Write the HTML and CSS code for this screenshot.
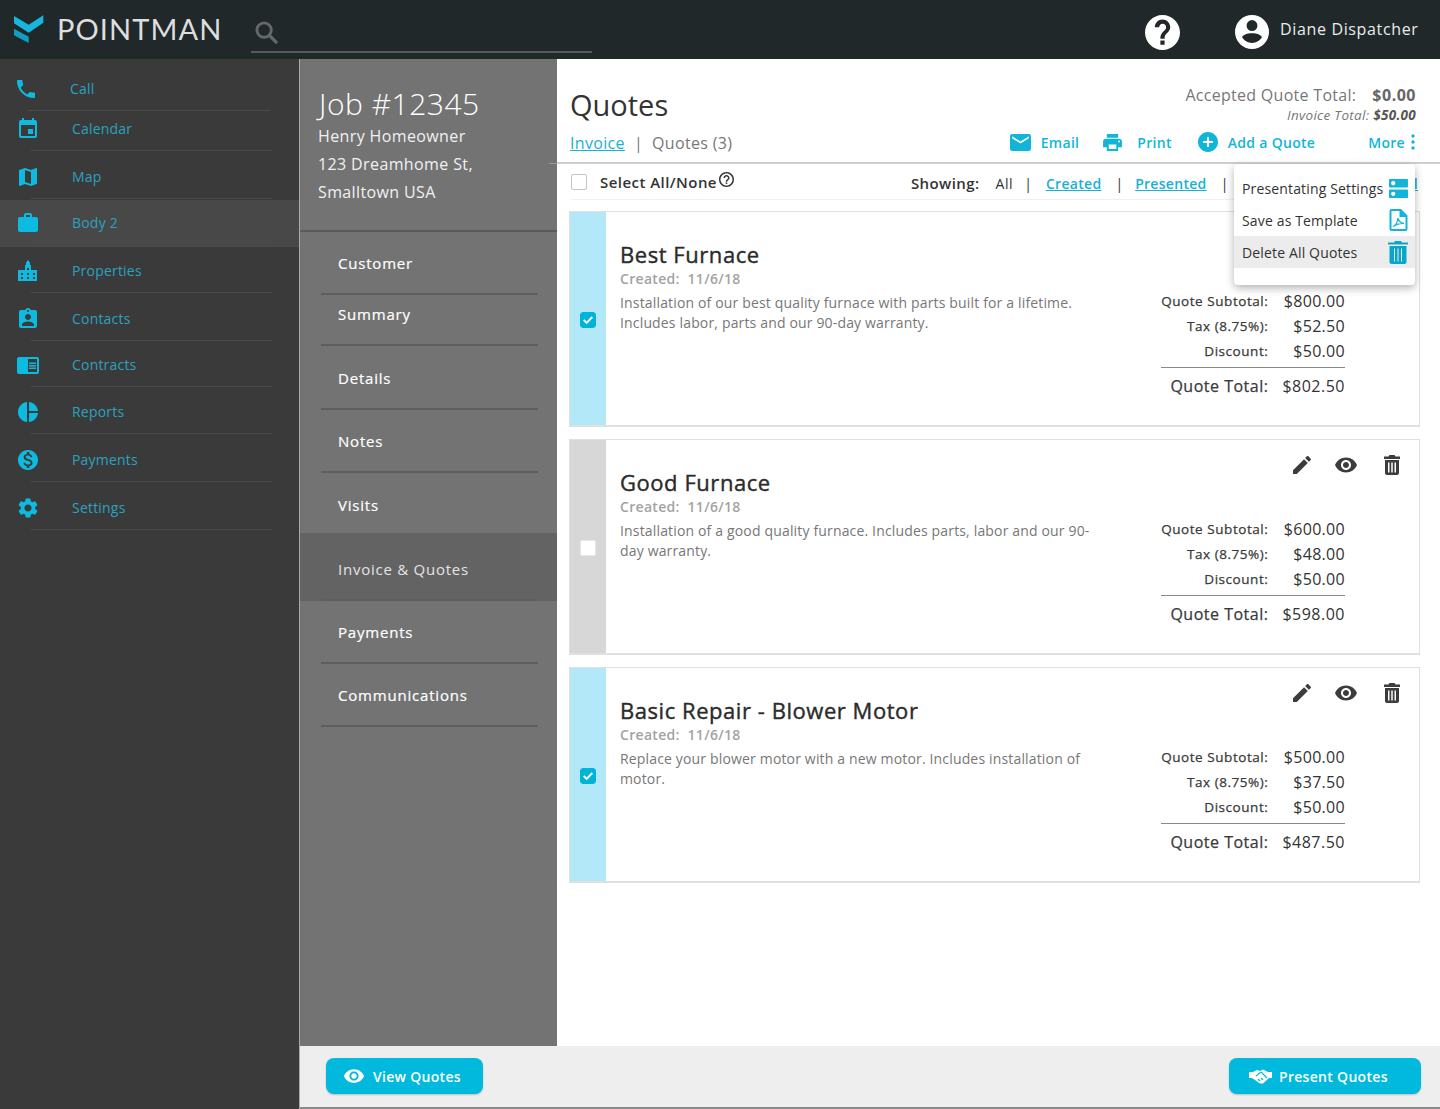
FILE: index.html
```html
<!DOCTYPE html>
<html lang="en">
<head>
<meta charset="utf-8">
<title>Pointman - Quotes</title>
<link rel="stylesheet" href="styles.css">
</head>
<body>
<svg class="sprite" aria-hidden="true">
  <defs>
    <symbol id="i-edit" viewBox="0 0 24 24"><path d="M3 17.25V21h3.75L17.81 9.94l-3.75-3.75L3 17.25zM20.71 7.04c.39-.39.39-1.02 0-1.41l-2.34-2.34c-.39-.39-1.02-.39-1.41 0l-1.83 1.83 3.75 3.75 1.83-1.83z"/></symbol>
    <symbol id="i-eye" viewBox="0 0 24 24"><path d="M12 4.5C7 4.5 2.73 7.61 1 12c1.73 4.39 6 7.5 11 7.5s9.27-3.11 11-7.5c-1.73-4.39-6-7.5-11-7.5zM12 17c-2.76 0-5-2.24-5-5s2.24-5 5-5 5 2.24 5 5-2.24 5-5 5zm0-8c-1.66 0-3 1.34-3 3s1.34 3 3 3 3-1.34 3-3-1.34-3-3-3z"/></symbol>
    <symbol id="i-trash" viewBox="0 0 24 24"><path fill-rule="evenodd" d="M9.5 2h5l1 1.5H20V6H4V3.5h4.500zM5 7h14v13c0 1.100-.9 2-2 2H7c-1.100 0-2-.9-2-2zm3 2.500V19.500h1.500V9.500zm3.250 0V19.500h1.500V9.500zm3.250 0V19.500H16V9.500z"/></symbol>
    <symbol id="i-check" viewBox="0 0 16 16"><path d="M2 0h12a2 2 0 0 1 2 2v12a2 2 0 0 1-2 2H2a2 2 0 0 1-2-2V2a2 2 0 0 1 2-2zm4.600 12.200 6.400-6.500-1.400-1.400-5 5.100-2.200-2.200L3 8.600z" fill-rule="evenodd"/></symbol>
  </defs>
</svg>
<div class="app">
  <header class="topbar">
    <div class="brand">
      <svg class="logo" viewBox="0 0 30 28" aria-hidden="true">
        <polygon points="0,1 14.700,9.700 29.300,0.300 29.300,7.700 14.700,17.700 0,8.300" fill="#17b6dc"/>
        <polygon points="0,13.700 14.700,21.700 14.700,28 0,20.300" fill="#0f9ec2"/>
      </svg>
      <span class="brand-name">POINTMAN</span>
    </div>
    <div class="search">
      <svg class="search-icon" viewBox="0 0 26 26" aria-hidden="true"><circle cx="10.500" cy="10.500" r="7.500" fill="none" stroke="currentColor" stroke-width="3"/><path d="M16 16l8 8" stroke="currentColor" stroke-width="3.500"/></svg>
    </div>
    <svg class="help-icon" viewBox="2 2 20 20" aria-hidden="true"><path d="M12 2C6.480 2 2 6.480 2 12s4.480 10 10 10 10-4.480 10-10S17.520 2 12 2zm1.200 17h-2.400v-2.400h2.400V19zm2.200-7.500l-.9.900c-.9.800-1.300 1.500-1.300 3.100h-2.400v-.6c0-1.200.5-2.300 1.300-3.100l1.400-1.400c.4-.4.600-.9.600-1.400 0-1.100-.9-2-2-2s-2 .9-2 2H7.600c0-2.400 2-4.400 4.400-4.400s4.400 2 4.400 4.400c0 1-.4 1.800-1 2.400z"/></svg>
    <div class="user">
      <svg class="user-icon" viewBox="2 2 20 20" aria-hidden="true"><path fill-rule="evenodd" d="M12 2a10 10 0 1 0 0 20 10 10 0 0 0 0-20zm0 3a3.200 3.200 0 1 1 0 6.400A3.200 3.200 0 0 1 12 5zm0 7.800c2.800 0 5.300.9 5.800 2.300-1.100 2-3.300 3.300-5.800 3.300s-4.700-1.300-5.800-3.300c.5-1.400 3-2.300 5.800-2.300z"/></svg>
      <span>Diane Dispatcher</span>
    </div>
  </header>

  <nav class="rail">
    <a class="rail-item rail-first"><svg class="rail-icon" viewBox="0 0 24 24"><path d="M6.620 10.790c1.440 2.830 3.760 5.140 6.590 6.590l2.200-2.200c.27-.27.67-.36 1.020-.24 1.120.37 2.330.57 3.570.57.55 0 1 .45 1 1V20c0 .55-.45 1-1 1-9.390 0-17-7.610-17-17 0-.55.45-1 1-1h3.500c.55 0 1 .45 1 1 0 1.250.2 2.450.57 3.570.11.35.03.74-.25 1.020l-2.200 2.200z"/></svg><span>Call</span></a>
    <a class="rail-item"><svg class="rail-icon" viewBox="0 0 24 24"><path d="M17 12h-5v5h5v-5zM16 1v2H8V1H6v2H5c-1.110 0-2 .9-2 2v14c0 1.100.89 2 2 2h14c1.100 0 2-.9 2-2V5c0-1.100-.9-2-2-2h-1V1h-2zm3 18H5V8h14v11z"/></svg><span>Calendar</span></a>
    <a class="rail-item"><svg class="rail-icon" viewBox="0 0 24 24"><path d="M20.500 3l-.16.03L15 5.100 9 3 3.360 4.900c-.21.07-.36.25-.36.48V20.500c0 .28.22.5.5.5l.16-.03L9 18.900l6 2.100 5.640-1.900c.21-.07.36-.25.36-.48V3.500c0-.28-.22-.5-.5-.5zM15 19l-6-2.110V5l6 2.110V19z"/></svg><span>Map</span></a>
    <a class="rail-item is-active"><svg class="rail-icon" viewBox="0 0 24 24"><path d="M20 6h-4V4c0-1.110-.89-2-2-2h-4c-1.110 0-2 .89-2 2v2H4c-1.110 0-2 .89-2 2v11c0 1.110.89 2 2 2h16c1.110 0 2-.89 2-2V8c0-1.110-.89-2-2-2zm-6 0h-4V4h4v2z"/></svg><span>Body 2</span></a>
    <a class="rail-item"><svg class="rail-icon" viewBox="0 0 24 24"><path fill-rule="evenodd" d="M9 6h1V3h1V1.500h2V3h1v3h1v5h6v11H2V11h7V6zM5 14v2h2v-2zm0 4v2h2v-2zm6-9v2h2V9zm0 5v2h2v-2zm0 4v2h2v-2zm6-4v2h2v-2zm0 4v2h2v-2z"/></svg><span>Properties</span></a>
    <a class="rail-item"><svg class="rail-icon" viewBox="0 0 24 24"><path d="M19 3h-4.180C14.400 1.840 13.300 1 12 1c-1.300 0-2.400.84-2.820 2H5c-1.100 0-2 .9-2 2v14c0 1.100.9 2 2 2h14c1.100 0 2-.9 2-2V5c0-1.100-.9-2-2-2zm-7 0c.55 0 1 .45 1 1s-.45 1-1 1-1-.45-1-1 .45-1 1-1zm0 4c1.660 0 3 1.340 3 3s-1.340 3-3 3-3-1.340-3-3 1.340-3 3-3zm6 12H6v-1.400c0-2 4-3.100 6-3.100s6 1.100 6 3.100V19z"/></svg><span>Contacts</span></a>
    <a class="rail-item"><svg class="rail-icon" viewBox="0 0 24 24"><path d="M13 12h7v1.500h-7zm0-2.500h7V11h-7zm0 5h7V16h-7zM21 4H3c-1.100 0-2 .9-2 2v13c0 1.100.9 2 2 2h18c1.100 0 2-.9 2-2V6c0-1.100-.9-2-2-2zm0 15h-9V6h9v13z"/></svg><span>Contracts</span></a>
    <a class="rail-item"><svg class="rail-icon" viewBox="0 0 24 24"><path d="M11 2v20c-5.070-.5-9-4.790-9-10s3.930-9.500 9-10zm2.030 0v8.990H22c-.47-4.740-4.240-8.520-8.970-8.990zm0 11.010V22c4.740-.47 8.500-4.250 8.970-8.990h-8.970z"/></svg><span>Reports</span></a>
    <a class="rail-item"><svg class="rail-icon" viewBox="0 0 24 24"><path d="M12 2C6.480 2 2 6.480 2 12s4.480 10 10 10 10-4.480 10-10S17.520 2 12 2zm1.410 16.090V20h-2.670v-1.930c-1.710-.36-3.160-1.460-3.270-3.400h1.960c.1 1.050.82 1.870 2.650 1.870 1.960 0 2.400-.98 2.400-1.590 0-.83-.44-1.610-2.670-2.140-2.480-.6-4.180-1.620-4.180-3.670 0-1.720 1.390-2.840 3.110-3.210V4h2.670v1.950c1.860.45 2.790 1.860 2.850 3.390H14.300c-.05-1.110-.64-1.870-2.220-1.870-1.500 0-2.400.68-2.400 1.640 0 .84.65 1.390 2.670 1.910s4.180 1.390 4.180 3.910c-.01 1.830-1.380 2.830-3.120 3.160z"/></svg><span>Payments</span></a>
    <a class="rail-item"><svg class="rail-icon" viewBox="0 0 24 24"><path d="M19.140 12.940c.04-.3.06-.61.06-.94 0-.32-.02-.64-.07-.94l2.030-1.580c.18-.14.23-.41.12-.61l-1.920-3.320c-.12-.22-.37-.29-.59-.22l-2.390.96c-.5-.38-1.030-.7-1.620-.94l-.36-2.540c-.04-.24-.24-.41-.48-.41h-3.840c-.24 0-.43.17-.47.41l-.36 2.540c-.59.24-1.130.57-1.620.94l-2.390-.96c-.22-.08-.47 0-.59.22L2.740 8.870c-.12.21-.08.47.12.61l2.030 1.580c-.05.3-.09.63-.09.94s.02.64.07.94l-2.030 1.580c-.18.14-.23.41-.12.61l1.920 3.320c.12.22.37.29.59.22l2.390-.96c.5.38 1.030.7 1.620.94l.36 2.540c.05.24.24.41.48.41h3.840c.24 0 .44-.17.47-.41l.36-2.540c.59-.24 1.130-.56 1.620-.94l2.390.96c.22.08.47 0 .59-.22l1.920-3.320c.12-.22.07-.47-.12-.61l-2.010-1.580zM12 15.600c-1.980 0-3.600-1.620-3.600-3.600s1.620-3.600 3.600-3.600 3.600 1.620 3.600 3.600-1.620 3.600-3.600 3.600z"/></svg><span>Settings</span></a>
  </nav>

  <aside class="panel">
    <div class="job">
      <h2 class="job-title">Job #12345</h2>
      <p class="job-line">Henry Homeowner</p>
      <p class="job-line">123 Dreamhome St,</p>
      <p class="job-line">Smalltown USA</p>
    </div>
    <ul class="job-menu">
      <li class="job-item"><span>Customer</span></li>
      <li class="job-item"><span>Summary</span></li>
      <li class="job-item"><span>Details</span></li>
      <li class="job-item"><span>Notes</span></li>
      <li class="job-item"><span>Visits</span></li>
      <li class="job-item is-active"><span>Invoice &amp; Quotes</span></li>
      <li class="job-item"><span>Payments</span></li>
      <li class="job-item"><span>Communications</span></li>
    </ul>
  </aside>

  <main class="main">
    <div class="main-head">
      <div class="head-top">
        <h1 class="page-title">Quotes</h1>
        <div class="sums">
          <div class="sum-accepted"><span>Accepted Quote Total:</span><b>$0.00</b></div>
          <div class="sum-invoice">Invoice Total: <b>$50.00</b></div>
        </div>
      </div>
      <div class="head-bottom">
        <div class="tabs"><a class="tab-link">Invoice</a><span class="tab-sep">|</span><span>Quotes (3)</span></div>
        <div class="actions">
          <a class="action action-email"><svg viewBox="2 4 20 16" class="action-icon action-icon-wide"><path d="M20 4H4c-1.100 0-2 .9-2 2v12c0 1.100.9 2 2 2h16c1.100 0 2-.9 2-2V6c0-1.100-.9-2-2-2zm0 4l-8 5-8-5V6l8 5 8-5v2z"/></svg>Email</a>
          <a class="action action-print"><svg viewBox="2 3 20 18" class="action-icon action-icon-wide"><path d="M19 8H5c-1.660 0-3 1.340-3 3v6h4v4h12v-4h4v-6c0-1.660-1.340-3-3-3zm-3 11H8v-5h8v5zm3-7c-.55 0-1-.45-1-1s.45-1 1-1 1 .45 1 1-.45 1-1 1zm-1-9H6v4h12V3z"/></svg>Print</a>
          <a class="action action-add"><svg viewBox="2 2 20 20" class="action-icon"><path d="M12 2C6.480 2 2 6.480 2 12s4.480 10 10 10 10-4.480 10-10S17.520 2 12 2zm5 11h-4v4h-2v-4H7v-2h4V7h2v4h4v2z"/></svg>Add a Quote</a>
          <a class="action action-more">More<svg viewBox="0 0 4 16" class="more-dots"><circle cx="2" cy="2" r="1.700"/><circle cx="2" cy="8" r="1.700"/><circle cx="2" cy="14" r="1.700"/></svg></a>
        </div>
      </div>
    </div>

    <div class="filter">
      <span class="box"></span>
      <span class="select-all">Select All/None</span>
      <svg class="q-icon" viewBox="2 2 20 20"><path d="M11 18h2v-2h-2v2zm1-16C6.480 2 2 6.480 2 12s4.480 10 10 10 10-4.480 10-10S17.520 2 12 2zm0 18c-4.410 0-8-3.590-8-8s3.590-8 8-8 8 3.590 8 8-3.590 8-8 8zm0-14c-2.210 0-4 1.790-4 4h2c0-1.100.9-2 2-2s2 .9 2 2c0 2-3 1.750-3 5h2c0-2.250 3-2.500 3-5 0-2.210-1.790-4-4-4z"/></svg>
      <div class="showing">
        <span class="showing-label">Showing:</span>
        <span class="showing-all">All</span><i class="bar">|</i>
        <a class="link">Created</a><i class="bar">|</i>
        <a class="link">Presented</a><i class="bar">|</i>
      </div>
      <a class="link link-stub">l</a>
    </div>

    <div class="menu-pop">
      <div class="pop-item"><span>Presentating Settings</span><svg viewBox="3 3 18 18" class="pop-icon"><path d="M20 13H4c-.55 0-1 .45-1 1v6c0 .55.45 1 1 1h16c.55 0 1-.45 1-1v-6c0-.55-.45-1-1-1zM7 19c-1.100 0-2-.9-2-2s.9-2 2-2 2 .9 2 2-.9 2-2 2zM20 3H4c-.55 0-1 .45-1 1v6c0 .55.45 1 1 1h16c.55 0 1-.45 1-1V4c0-.55-.45-1-1-1zM7 9c-1.100 0-2-.9-2-2s.9-2 2-2 2 .9 2 2-.9 2-2 2z"/></svg></div>
      <div class="pop-item"><span>Save as Template</span><svg viewBox="0 0 18 22" class="pop-icon pop-icon-pdf"><path fill-rule="evenodd" d="M2 0h9.500L18 6.500V20a2 2 0 0 1-2 2H2a2 2 0 0 1-2-2V2a2 2 0 0 1 2-2zm0 2v18h14V8h-6V2z"/><path d="M3.500 17.500c2.500-1 4.500-4.500 5-8.500.7 3 2.500 5 6 5.500-3.500-.5-7 .5-11 3z" fill="none" stroke="currentColor" stroke-width="1.200"/></svg></div>
      <div class="pop-item is-hover"><span>Delete All Quotes</span><svg viewBox="0 0 20 23" class="pop-icon pop-icon-trash"><path fill-rule="evenodd" d="M7 0h6l1 1.500h6V3.500H0V1.500h6zM1.500 5h17v16a2 2 0 0 1-2 2h-13a2 2 0 0 1-2-2zM6 7.500v13h1v-13zm3.500 0v13h1v-13zm3.500 0v13h1v-13z"/></svg></div>
    </div>

    <section class="quotes">
      <article class="quote is-on">
        <div class="quote-band"><svg class="tick"><use href="#i-check"/></svg></div>
        <div class="quote-text">
          <h3 class="quote-title">Best Furnace</h3>
          <p class="quote-date">Created:&nbsp; 11/6/18</p>
          <p class="quote-desc">Installation of our best quality furnace with parts built for a lifetime. Includes labor, parts and our 90-day warranty.</p>
        </div>
        <div class="quote-side">
          <div class="quote-tools"><svg class="tool tool-edit"><use href="#i-edit"/></svg><svg class="tool tool-eye"><use href="#i-eye"/></svg><svg class="tool tool-trash"><use href="#i-trash"/></svg></div>
          <dl class="totals">
            <dt>Quote Subtotal:</dt><dd>$800.00</dd>
            <dt>Tax (8.75%):</dt><dd>$52.50</dd>
            <dt>Discount:</dt><dd>$50.00</dd>
            <dt class="grand">Quote Total:</dt><dd class="grand">$802.50</dd>
          </dl>
        </div>
      </article>
      <article class="quote">
        <div class="quote-band"><span class="box box-band"></span></div>
        <div class="quote-text">
          <h3 class="quote-title">Good Furnace</h3>
          <p class="quote-date">Created:&nbsp; 11/6/18</p>
          <p class="quote-desc">Installation of a good quality furnace. Includes parts, labor and our 90-day warranty.</p>
        </div>
        <div class="quote-side">
          <div class="quote-tools"><svg class="tool tool-edit"><use href="#i-edit"/></svg><svg class="tool tool-eye"><use href="#i-eye"/></svg><svg class="tool tool-trash"><use href="#i-trash"/></svg></div>
          <dl class="totals">
            <dt>Quote Subtotal:</dt><dd>$600.00</dd>
            <dt>Tax (8.75%):</dt><dd>$48.00</dd>
            <dt>Discount:</dt><dd>$50.00</dd>
            <dt class="grand">Quote Total:</dt><dd class="grand">$598.00</dd>
          </dl>
        </div>
      </article>
      <article class="quote is-on">
        <div class="quote-band"><svg class="tick"><use href="#i-check"/></svg></div>
        <div class="quote-text">
          <h3 class="quote-title">Basic Repair - Blower Motor</h3>
          <p class="quote-date">Created:&nbsp; 11/6/18</p>
          <p class="quote-desc">Replace your blower motor with a new motor. Includes installation of motor.</p>
        </div>
        <div class="quote-side">
          <div class="quote-tools"><svg class="tool tool-edit"><use href="#i-edit"/></svg><svg class="tool tool-eye"><use href="#i-eye"/></svg><svg class="tool tool-trash"><use href="#i-trash"/></svg></div>
          <dl class="totals">
            <dt>Quote Subtotal:</dt><dd>$500.00</dd>
            <dt>Tax (8.75%):</dt><dd>$37.50</dd>
            <dt>Discount:</dt><dd>$50.00</dd>
            <dt class="grand">Quote Total:</dt><dd class="grand">$487.50</dd>
          </dl>
        </div>
      </article>
    </section>
  </main>

  <footer class="footer">
    <button class="btn btn-view"><svg class="btn-eye"><use href="#i-eye"/></svg>View Quotes</button>
    <button class="btn btn-present">
      <svg class="btn-hands" viewBox="0 0 23 15" aria-hidden="true">
        <path d="M0 3h4l4-2 3 1 3-1.500L19 3h4v6h-3l-6 5.500h-3L6 11 3 9H0z"/>
        <path class="hands-line" d="M7 7l5-4 6 6M9 10l2 2M12 9l2 2"/>
      </svg>Present Quotes</button>
  </footer>
  <div class="footer-edge"></div>
</div>
</body>
</html>
```
FILE: styles.css
```css
* { box-sizing: border-box; }
html, body { margin: 0; padding: 0; }
body { font-family: "Open Sans", "Liberation Sans", sans-serif; color: #333; background: #fff; overflow: hidden; }
h1, h2, h3, p, ul, dl, dd { margin: 0; padding: 0; }
ul { list-style: none; }
svg { fill: currentColor; display: block; flex: none; }
.sprite { position: absolute; width: 0; height: 0; }

.app {
  width: 1440px; height: 1109px;
  display: grid;
  grid-template-columns: 300px 257px 1fr;
  grid-template-rows: 59px 1fr 61px 2px;
}

/* top bar */
.topbar { grid-column: 1 / -1; background: #212829; display: flex; align-items: flex-start; color: #fff; }
.brand { width: 251px; display: flex; align-items: center; height: 59px; padding-left: 14px; }
.logo { width: 30px; height: 28px; margin-top: -1px; }
.brand-name { font-family: "Lato", sans-serif; font-size: 29px; letter-spacing: 1.100px; color: #dcdedf; margin: -2px 0 0 13px; line-height: 59px; }
.search { width: 341px; height: 53px; border-bottom: 2px solid #565b5c; padding: 20px 0 0 3px; color: #646869; }
.search-icon { width: 25px; height: 25px; }
.help-icon { width: 35px; height: 35px; margin: 15px 0 0 553px; }
.user { display: flex; align-items: center; margin: 12px 0 0 55px; font-size: 16px; letter-spacing: .65px; color: #e9ecec; gap: 11px; height: 36px; }
.user-icon { width: 34px; height: 34px; color: #fff; margin-top: 3px; }
.user span { margin-top: -2px; }

/* left rail */
.rail {
  grid-column: 1; grid-row: 2 / -1;
  background: #3a3a3a; border-right: 1px solid #aaa;
  display: grid; align-content: start;
  grid-template-rows: 52px 40px 48px 48px 46px 48px 46px 47px 48px 48px;
}
.rail-item { position: relative; display: flex; align-items: flex-end; padding: 0 0 12px 16px; font-size: 14px; line-height: 20px; letter-spacing: .2px; color: #2ba2bf; }
.rail-item::after { content: ""; position: absolute; left: 31px; width: 241px; bottom: 0; height: 1px; background: #4b4b4b; }
.rail-icon { width: 24px; height: 24px; color: #0ebbe0; margin-right: 32px; margin-bottom: -2px; }
.rail-first { padding-left: 14px; }
.rail-first::after { left: 28px; width: 242px; }
.rail-item.is-active { background: #484848; margin-top: 1px; padding-bottom: 14px; }

/* job panel */
.panel { grid-column: 2; grid-row: 2; background: #737373; color: #fff; }
.job { height: 173px; padding: 27px 0 0 18px; border-bottom: 2px solid #5a5a5a; }
.job-title { font-size: 30px; font-weight: 300; line-height: 36px; letter-spacing: .5px; margin: 0 0 0 1px; }
.job-line { font-size: 16px; line-height: 28px; letter-spacing: .38px; color: #f1f1f1; }
.job-menu { display: grid; grid-template-rows: 63px 51px 64px 63px 64px 64px 63px 63px; }
.job-item { position: relative; padding: 0 0 22px 38px; display: flex; align-items: flex-end; font-size: 15px; line-height: 20px; letter-spacing: .8px; -webkit-text-stroke: .2px currentColor; }
.job-item::after { content: ""; position: absolute; left: 21px; width: 217px; bottom: 0; height: 2px; background: #5e5e5e; }
.job-item.is-active { background: #636363; margin-top: -4px; color: #e4e4e4; letter-spacing: .75px; -webkit-text-stroke: 0; }

/* main header */
.main { grid-column: 3; grid-row: 2; position: relative; min-width: 0; }
.main-head { height: 105px; padding: 0 24px 0 13px; border-bottom: 2px solid #cfcfcf; position: relative; }
.main-head::before { content: ""; position: absolute; left: -8px; width: 8px; bottom: -2px; height: 1px; background: #999; }
.head-top { display: flex; justify-content: space-between; height: 66px; }
.page-title { font-size: 29px; font-weight: 400; line-height: 40px; margin-top: 26px; color: #333; }
.sums { text-align: right; padding-top: 25px; color: #777; }
.sum-accepted { font-size: 16px; line-height: 22px; letter-spacing: .29px; display: flex; justify-content: flex-end; gap: 16px; }
.sum-accepted b { color: #666; font-weight: 700; letter-spacing: .5px; }
.sum-invoice { font-size: 13.500px; font-style: italic; line-height: 19px; letter-spacing: .3px; }
.sum-invoice b { color: #555; }
.head-bottom { display: flex; justify-content: space-between; align-items: center; height: 36px; }
.tabs { font-size: 16px; letter-spacing: .33px; color: #777; display: flex; }
.tab-link { color: #17b1d5; text-decoration: underline; }
.tab-sep { margin: 0 9px; }
.actions { display: flex; align-items: center; font-size: 14px; font-weight: 600; letter-spacing: .3px; color: #12b5da; margin-top: -2px; }
.action { display: flex; align-items: center; }
.action-icon { width: 20px; height: 20px; margin-right: 10px; }
.action-icon-wide { width: 21px; height: 17px; margin-right: 10px; }
.action-print { margin-left: 23px; }
.action-print .action-icon-wide { margin-right: 14px; }
.action-add { margin-left: 26px; }
.action-more { margin-left: 53px; }
.more-dots { width: 4px; height: 16px; margin-left: 6px; margin-right: 1px; }

/* filter row */
.filter { height: 36px; margin: 0 0 0 13px; padding-right: 22px; display: flex; align-items: center; position: relative; }
.filter::after { content: ""; position: absolute; left: 1px; right: 24px; bottom: 0; height: 1px; background: #f0f0f0; }
.box { width: 16px; height: 16px; border: 1px solid #c4c4c4; border-radius: 2px; background: #fff; margin-left: 1px; }
.select-all { font-size: 15px; font-weight: 600; color: #333; margin-left: 13px; letter-spacing: .45px; }
.q-icon { width: 15px; height: 15px; margin: -6px 0 0 2px; color: #333; }
.showing { display: flex; align-items: center; margin-left: 177px; margin-top: 2px; font-size: 14px; color: #333; }
.showing-label { font-size: 15px; font-weight: 600; margin-right: 16px; letter-spacing: .4px; }
.showing-all { letter-spacing: .6px; }
.bar { font-style: normal; margin: 0 14px 0 11px; }
.link + .bar { margin: 0 12px 0 14px; }
.link { color: #17b1d5; text-decoration: underline; font-weight: 600; font-size: 14px; letter-spacing: .3px; }
.link-stub { margin-left: auto; margin-top: 2px; }

/* more menu */
.menu-pop {
  position: absolute; left: 677px; top: 105px; width: 181px; height: 121px;
  background: #fff; border-radius: 4px; padding-top: 8px;
  box-shadow: 0 3px 8px rgba(0,0,0,.3); z-index: 5;
}
.pop-item { height: 32px; padding: 0 7px 0 8px; display: flex; align-items: center; justify-content: space-between; font-size: 14px; letter-spacing: .15px; color: #333; }
.pop-item.is-hover { background: #ececec; }
.pop-icon { width: 19px; height: 19px; color: #12b5da; }
.pop-icon-pdf { height: 22px; }
.pop-icon-trash { width: 20px; height: 23px; color: #08a7c9; }

/* quote cards */
.quotes { display: flex; flex-direction: column; gap: 12px; margin: 11px 20px 0 12px; }
.quote { height: 216px; display: flex; border: 1px solid #e0e0e0; border-bottom-width: 2px; }
.quote-band { width: 36px; background: #d7d7d7; display: flex; justify-content: center; padding-top: 100px; }
.quote.is-on .quote-band { background: #b2e8f7; }
.tick { width: 16px; height: 16px; color: #00b4d8; background: #fff; border-radius: 3px; }
.box-band { margin: 0; border-color: #e8e8e8; }
.quote-text { width: 490px; padding: 27px 0 0 14px; }
.quote-title { font-size: 22px; font-weight: 400; color: #2b2b2b; line-height: 30px; letter-spacing: .55px; -webkit-text-stroke: .4px currentColor; }
.quote-date { font-size: 14px; font-weight: 600; color: #a3a3a3; line-height: 18px; margin-top: 1px; letter-spacing: .3px; }
.quote-desc { font-size: 14px; color: #777; line-height: 20px; margin-top: 5px; letter-spacing: .16px; }
.quote-side { flex: 1; }
.quote-tools { display: flex; justify-content: flex-end; align-items: center; padding: 11px 15px 0 0; height: 38px; color: #3c3c3c; }
.tool { width: 24px; height: 24px; }
.tool-eye { margin: 0 22px 0 20px; }
.totals { display: grid; grid-template-columns: 1fr auto; margin: 39px 74px 0 65px; }
.totals dt { font-size: 13.500px; line-height: 25px; text-align: right; white-space: nowrap; padding-right: 14px; color: #3a3a3a; letter-spacing: .55px; -webkit-text-stroke: .25px currentColor; }
.totals dd { font-size: 16px; line-height: 25px; text-align: right; color: #333; letter-spacing: .3px; }
.totals .grand { border-top: 1px solid #8a8a8a; margin-top: 3px; line-height: 36px; font-size: 16px; letter-spacing: .5px; }

/* footer */
.footer { grid-column: 2 / -1; grid-row: 3; background: #eeeeee; display: flex; justify-content: space-between; align-items: flex-start; padding: 12px 19px 0 26px; }
.btn { height: 36px; border: 0; border-radius: 8px; background: #00b9dc; color: #fff; font-family: inherit; font-size: 14px; font-weight: 600; letter-spacing: .3px; display: flex; align-items: center; box-shadow: 0 1px 2px rgba(0,0,0,.2); }
.btn-view { width: 157px; padding: 0 0 0 17px; }
.btn-eye { width: 22px; height: 22px; margin-right: 8px; }
.btn-present { width: 192px; padding: 0 0 0 20px; }
.btn-hands { width: 23px; height: 15px; margin-right: 7px; }
.hands-line { fill: none; stroke: #00b9dc; stroke-width: 1.200; }
.footer-edge { grid-column: 2 / -1; grid-row: 4; background: #8a8a8a; }
```
